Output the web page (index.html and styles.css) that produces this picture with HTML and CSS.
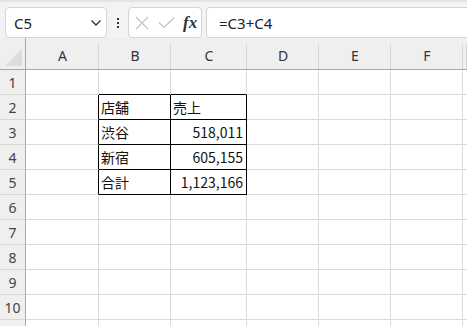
FILE: index.html
```html
<!DOCTYPE html>
<html lang="ja">
<head>
    <meta charset="UTF-8">
    <meta name="viewport" content="width=device-width, initial-scale=1.0">
    <title>Sheet</title>
    <link rel="stylesheet" href="styles.css">
</head>
<body>

<div class="formula-bar">
    <div class="name-box">
        <span>C5</span>
        <svg class="chevron" width="12" height="8" viewBox="0 0 12 8"><path d="M1.5 1.5 L6 6 L10.5 1.5" fill="none" stroke="#333" stroke-width="1.4"/></svg>
    </div>
    <div class="more">
        <i></i><i></i><i></i>
    </div>
    <div class="fn-box">
        <svg width="14" height="14" viewBox="0 0 14 14"><path d="M1 1 L13 13 M13 1 L1 13" stroke="#c2c2c2" stroke-width="1.2" fill="none"/></svg>
        <svg width="17" height="12" viewBox="0 0 17 12"><path d="M1 5.5 L6 10.5 L16 0.8" stroke="#c2c2c2" stroke-width="1.2" fill="none"/></svg>
        <span class="fx">fx</span>
    </div>
    <div class="formula">=C3+C4</div>
</div>

<div class="sheet">
    <div class="corner"><svg width="17" height="17" viewBox="0 0 17 17"><path d="M17 0 L17 17 L0 17 Z" fill="#dcdcdc"/></svg></div>
    <div class="col-head">A</div>
    <div class="col-head">B</div>
    <div class="col-head">C</div>
    <div class="col-head">D</div>
    <div class="col-head">E</div>
    <div class="col-head">F</div>
    <div class="col-head"></div>

    <div class="row-head">1</div>
    <div class="cell"></div><div class="cell bb"></div><div class="cell bb"></div><div class="cell"></div><div class="cell"></div><div class="cell"></div><div class="cell"></div>

    <div class="row-head">2</div>
    <div class="cell br"></div><div class="cell box">店舗</div><div class="cell box">売上</div><div class="cell"></div><div class="cell"></div><div class="cell"></div><div class="cell"></div>

    <div class="row-head">3</div>
    <div class="cell br"></div><div class="cell box">渋谷</div><div class="cell box num">518,011</div><div class="cell"></div><div class="cell"></div><div class="cell"></div><div class="cell"></div>

    <div class="row-head">4</div>
    <div class="cell br"></div><div class="cell box">新宿</div><div class="cell box num">605,155</div><div class="cell"></div><div class="cell"></div><div class="cell"></div><div class="cell"></div>

    <div class="row-head">5</div>
    <div class="cell br"></div><div class="cell box">合計</div><div class="cell box num">1,123,166</div><div class="cell"></div><div class="cell"></div><div class="cell"></div><div class="cell"></div>

    <div class="row-head">6</div>
    <div class="cell"></div><div class="cell"></div><div class="cell"></div><div class="cell"></div><div class="cell"></div><div class="cell"></div><div class="cell"></div>

    <div class="row-head">7</div>
    <div class="cell"></div><div class="cell"></div><div class="cell"></div><div class="cell"></div><div class="cell"></div><div class="cell"></div><div class="cell"></div>

    <div class="row-head">8</div>
    <div class="cell"></div><div class="cell"></div><div class="cell"></div><div class="cell"></div><div class="cell"></div><div class="cell"></div><div class="cell"></div>

    <div class="row-head">9</div>
    <div class="cell"></div><div class="cell"></div><div class="cell"></div><div class="cell"></div><div class="cell"></div><div class="cell"></div><div class="cell"></div>

    <div class="row-head">10</div>
    <div class="cell"></div><div class="cell"></div><div class="cell"></div><div class="cell"></div><div class="cell"></div><div class="cell"></div><div class="cell"></div>

    <div class="row-head last"></div>
    <div class="cell last"></div><div class="cell last"></div><div class="cell last"></div><div class="cell last"></div><div class="cell last"></div><div class="cell last"></div><div class="cell last"></div>
</div>

</body>
</html>
```

FILE: styles.css
```css
body {
    margin: 0;
    width: 467px;
    height: 326px;
    overflow: hidden;
    background-color: #fff;
    font-family: "Noto Sans", "Liberation Sans", sans-serif;
    color: #222;
}
.formula-bar {
    display: flex;
    align-items: stretch;
    height: 31px;
    padding-top: 7px;
    background-color: #f3f3f3;
    box-shadow: inset 0 2px 0 #e4e4e4;
}
.name-box {
    display: flex;
    align-items: center;
    justify-content: space-between;
    width: 102px;
    margin-left: 5px;
    padding: 0 4px 0 8px;
    box-sizing: border-box;
    background-color: #fff;
    border: 1px solid #d4d4d4;
    border-radius: 4px;
    font-size: 15px;
}
.chevron {
    margin-top: 1px;
}
.more {
    display: flex;
    flex-direction: column;
    justify-content: center;
    align-items: center;
    gap: 2px;
    width: 21px;
}
.more i {
    display: block;
    width: 2px;
    height: 2px;
    background-color: #333;
}
.fn-box {
    display: flex;
    align-items: center;
    gap: 9px;
    width: 74px;
    box-sizing: border-box;
    padding-left: 6px;
    background-color: #fff;
    border: 1px solid #d4d4d4;
    border-radius: 4px;
}
.fx {
    font-family: "Liberation Serif", serif;
    font-style: italic;
    font-weight: bold;
    font-size: 17px;
    color: #333;
    margin-left: -1px;
}
.formula {
    flex: 1;
    display: flex;
    align-items: center;
    margin-left: 4px;
    padding-left: 12px;
    background-color: #fff;
    border: 1px solid #d4d4d4;
    border-right: none;
    border-radius: 4px 0 0 4px;
    font-size: 15px;
}
.sheet {
    display: grid;
    grid-template-columns: 26px 73px 72px 76px 72px 72px 72px 4px;
    grid-template-rows: 32px repeat(10, 25px) 6px;
}
.corner {
    display: flex;
    align-items: flex-end;
    justify-content: flex-end;
    padding: 0 3px 3px 0;
    background-color: #efefef;
    border-right: 1px solid #a8a8a8;
    border-bottom: 1px solid #a8a8a8;
}
.col-head {
    display: flex;
    align-items: center;
    justify-content: center;
    padding-top: 4px;
    font-size: 14px;
    color: #333;
    background: linear-gradient(#d6d6d6, #d6d6d6) right bottom / 1px 25px no-repeat, #efefef;
    border-bottom: 1px solid #a8a8a8;
}
.row-head {
    display: flex;
    align-items: center;
    justify-content: center;
    font-size: 14px;
    color: #444;
    background-color: #efefef;
    border-right: 1px solid #a8a8a8;
    border-bottom: 1px solid #d6d6d6;
}
.cell {
    display: flex;
    align-items: center;
    padding: 0 3px 1px 2px;
    border-right: 1px solid #dadada;
    border-bottom: 1px solid #dadada;
    font-family: "Noto Sans CJK JP", sans-serif;
    font-size: 14px;
    color: #111;
    white-space: nowrap;
}
.last {
    border-bottom: none;
}
.bb {
    border-bottom-color: #000;
}
.br {
    border-right-color: #000;
}
.box {
    border-right-color: #000;
    border-bottom-color: #000;
}
.num {
    justify-content: flex-end;
}
```
